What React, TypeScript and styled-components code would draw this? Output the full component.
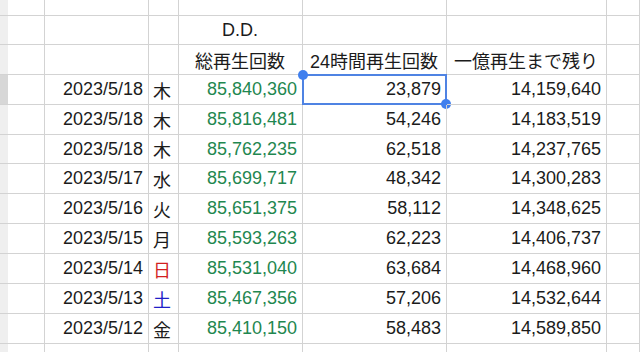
import React from 'react';
import styled, { createGlobalStyle } from 'styled-components';

const GlobalStyle = createGlobalStyle`
  html, body {
    margin: 0;
    padding: 0;
    background: #ffffff;
    overflow: hidden;
  }
`;

type Day = { date?: string; wd?: string; total?: string; day?: string; rest?: string };

const rows: Day[] = [
  { date: '2023/5/18', wd: '木', total: '85,840,360', day: '23,879', rest: '14,159,640' },
  { date: '2023/5/18', wd: '木', total: '85,816,481', day: '54,246', rest: '14,183,519' },
  { date: '2023/5/18', wd: '木', total: '85,762,235', day: '62,518', rest: '14,237,765' },
  { date: '2023/5/17', wd: '水', total: '85,699,717', day: '48,342', rest: '14,300,283' },
  { date: '2023/5/16', wd: '火', total: '85,651,375', day: '58,112', rest: '14,348,625' },
  { date: '2023/5/15', wd: '月', total: '85,593,263', day: '62,223', rest: '14,406,737' },
  { date: '2023/5/14', wd: '日', total: '85,531,040', day: '63,684', rest: '14,468,960' },
  { date: '2023/5/13', wd: '土', total: '85,467,356', day: '57,206', rest: '14,532,644' },
  { date: '2023/5/12', wd: '金', total: '85,410,150', day: '58,483', rest: '14,589,850' },
  {},
];

const Sheet = styled.div`
  display: grid;
  grid-template-columns: 8px 37px 104px 30px 124px 144px 160px 1fr;
  grid-template-rows: 16px 29px 30px 30px 30px 29px repeat(7, 30px);
  width: 640px;
  height: 352px;
  overflow: hidden;
  font-family: 'Liberation Sans', 'Noto Sans CJK JP', sans-serif;
  font-size: 18px;
  color: #1b1b1b;
`;

const Cell = styled.div<{ align?: 'left' | 'right' | 'center'; tone?: string }>`
  position: relative;
  box-sizing: border-box;
  border-right: 1px solid #d3d3d3;
  border-bottom: 1px solid #d3d3d3;
  display: flex;
  align-items: center;
  justify-content: ${({ align }) =>
    align === 'right' ? 'flex-end' : align === 'center' ? 'center' : 'flex-start'};
  padding: 0 5px 0 4px;
  white-space: nowrap;
  overflow: visible;
  color: ${({ tone }) => tone || '#1b1b1b'};
`;

const RowHead = styled.div<{ active?: boolean }>`
  box-sizing: border-box;
  background: ${({ active }) => (active ? '#d7d7d7' : '#efefef')};
  border-bottom: 1px solid #d3d3d3;
`;

const Selected = styled.div`
  position: absolute;
  left: -1px;
  top: -1px;
  right: -1px;
  bottom: -1px;
  border: 2px solid #4f83e3;
  pointer-events: none;
`;

const Handle = styled.span<{ corner: 'tl' | 'br' }>`
  position: absolute;
  width: 10px;
  height: 10px;
  border-radius: 50%;
  background: #3f7fee;
  ${({ corner }) => (corner === 'tl' ? 'left: -6px; top: -6px;' : 'right: -6px; bottom: -6px;')}
`;

const green = '#1f8750';
const wdColor = (wd?: string) => (wd === '日' ? '#d21f1f' : wd === '土' ? '#1f1fc8' : undefined);

const Blank = () => (
  <>
    <Cell />
    <Cell />
    <Cell />
  </>
);

export default function App() {
  return (
    <>
      <GlobalStyle />
      <Sheet>
        {/* top partial row */}
        <RowHead />
        <Cell />
        <Cell />
        <Cell />
        <Cell />
        <Blank />

        {/* header rows */}
        <RowHead />
        <Cell />
        <Cell />
        <Cell />
        <Cell align="center">D.D.</Cell>
        <Blank />

        <RowHead />
        <Cell />
        <Cell />
        <Cell />
        <Cell align="center">総再生回数</Cell>
        <Cell align="center">24時間再生回数</Cell>
        <Cell align="center">一億再生まで残り</Cell>
        <Cell />

        {rows.map((r, i) => (
          <React.Fragment key={i}>
            <RowHead active={i === 0} />
            <Cell />
            <Cell align="right">{r.date}</Cell>
            <Cell tone={wdColor(r.wd)}>{r.wd}</Cell>
            <Cell align="right" tone={green}>{r.total}</Cell>
            <Cell align="right">
              {r.day}
              {i === 0 && (
                <Selected>
                  <Handle corner="tl" />
                  <Handle corner="br" />
                </Selected>
              )}
            </Cell>
            <Cell align="right">{r.rest}</Cell>
            <Cell />
          </React.Fragment>
        ))}
      </Sheet>
    </>
  );
}
